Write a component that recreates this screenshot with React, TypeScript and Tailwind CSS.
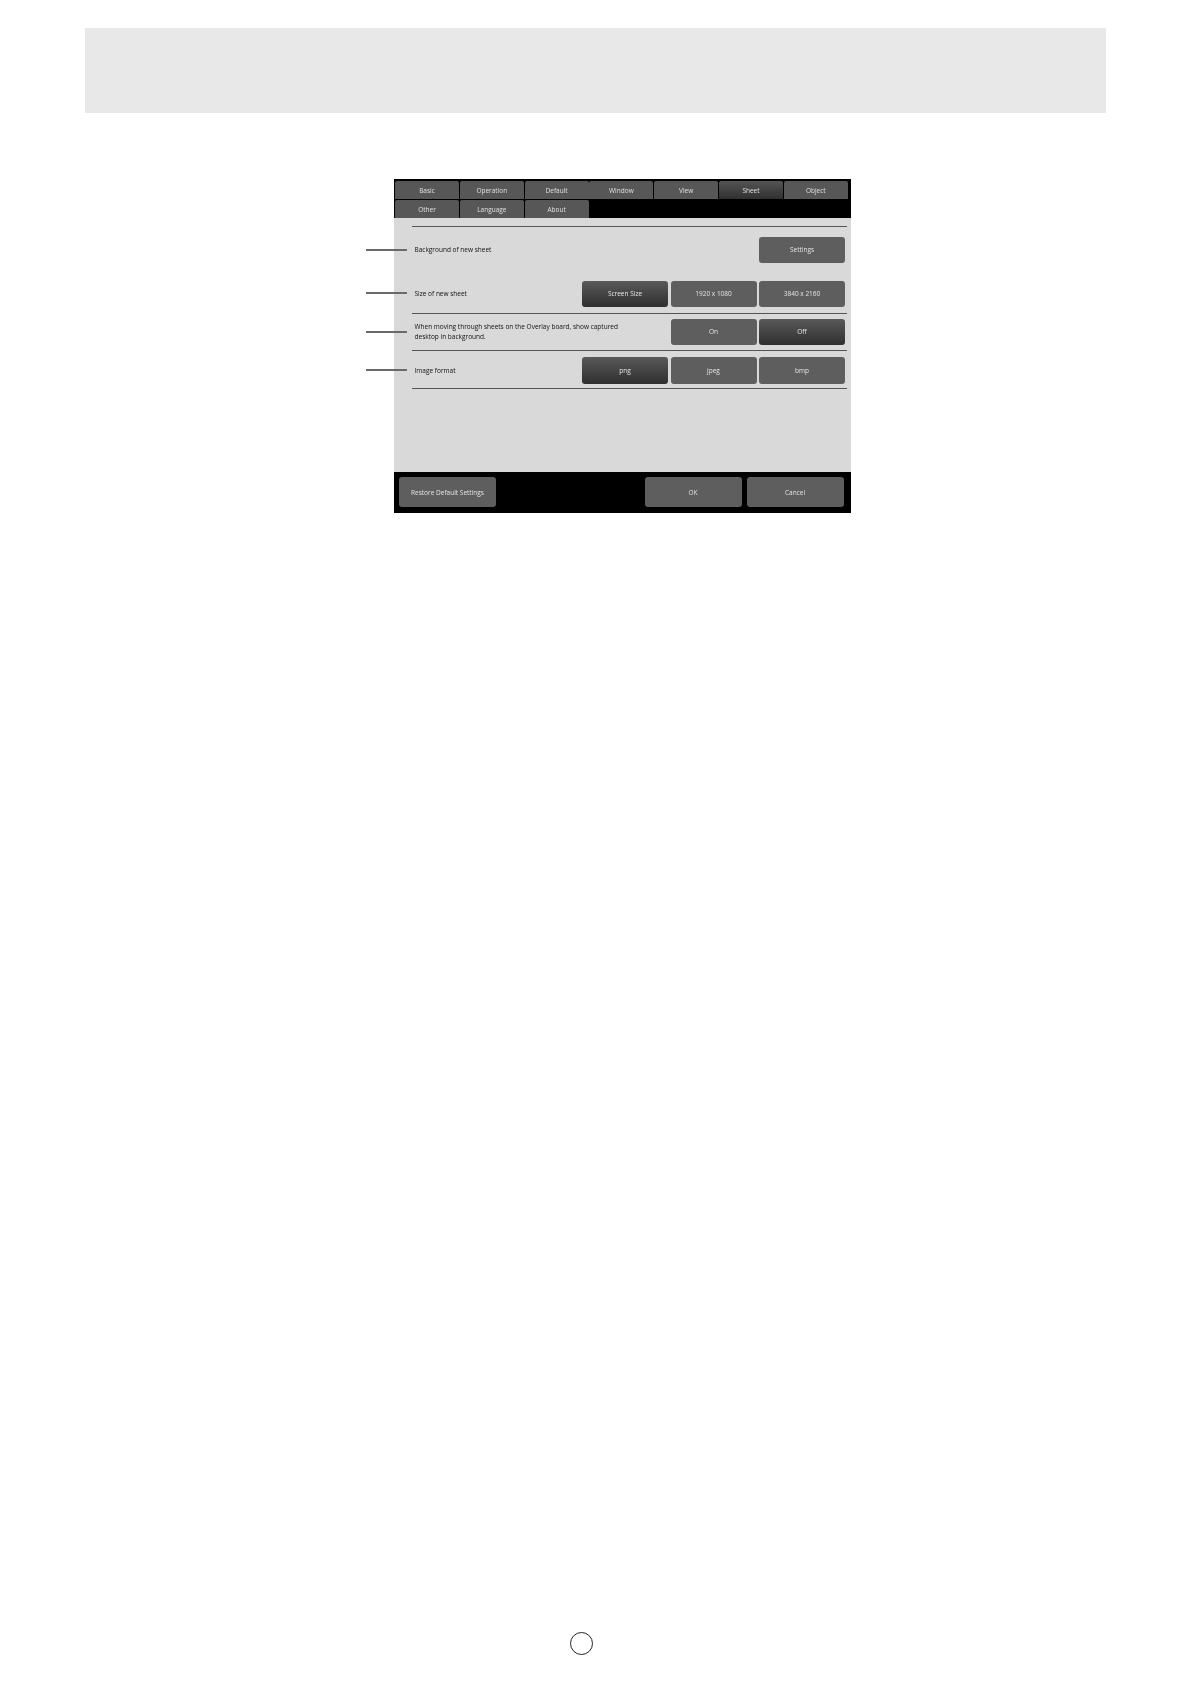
const font = "[font-family:'Open_Sans','Noto_Sans',sans-serif]";

function Btn({ label, active = false }: { label: string; active?: boolean }) {
  return (
    <div
      className={
        active
          ? "flex h-[26.5px] w-[86px] items-center justify-center rounded-[3px] bg-gradient-to-b from-[#5a5a5a] to-[#2f2f2f] text-[6.5px] text-[#e4e4e4]"
          : "flex h-[26.5px] w-[86px] items-center justify-center rounded-[3px] bg-[#5e5e5e] text-[6.5px] text-[#e4e4e4]"
      }
    >
      {label}
    </div>
  );
}

function Tab({ label, active = false }: { label: string; active?: boolean }) {
  return (
    <div
      className={
        active
          ? "flex h-[17.5px] w-[64px] items-center justify-center rounded-t-[2px] bg-gradient-to-b from-[#555555] to-[#303030] pt-[1.5px] text-[6.5px] text-[#e0e0e0]"
          : "flex h-[17.5px] w-[64px] items-center justify-center rounded-t-[2px] bg-[#575757] pt-[1.5px] text-[6.5px] text-[#e0e0e0]"
      }
    >
      {label}
    </div>
  );
}

function FootBtn({ label }: { label: string }) {
  return (
    <div className="flex h-[30px] w-[97px] items-center justify-center rounded-[3px] bg-[#5e5e5e] pt-[1px] text-[6.5px] text-[#e4e4e4]">
      {label}
    </div>
  );
}

function Leader({ className }: { className: string }) {
  return <div className={"absolute left-[366px] h-[2px] w-[41px] bg-[#6a6a6a] " + className} />;
}

export default function App() {
  return (
    <div className={"relative h-[1684px] w-[1191px] overflow-hidden bg-white pt-[28px] " + font}>
      <div className="ml-[85px] h-[85px] w-[1021px] bg-[#e8e8e8]" />

      <div className="ml-[394px] mt-[66px] flex h-[334px] w-[457px] flex-col bg-black blur-[0.3px]">
        <div className="flex flex-col gap-[1.5px] pl-[1px] pt-[2px]">
          <div className="flex gap-[0.8px]">
            <Tab label="Basic" />
            <Tab label="Operation" />
            <Tab label="Default" />
            <Tab label="Window" />
            <Tab label="View" />
            <Tab label="Sheet" active />
            <Tab label="Object" />
          </div>
          <div className="flex gap-[0.8px]">
            <Tab label="Other" />
            <Tab label="Language" />
            <Tab label="About" />
          </div>
        </div>

        <div className="mr-[0.5px] flex flex-1 flex-col bg-[#d9d9d9] pl-[18px] pr-[4px] pt-[8px] text-[6.5px] text-[#111]">
          <div className="border-t border-[#555] pl-[2.5px] pr-[1.5px]">
            <div className="flex items-center justify-between pt-[10px]">
              <span>Background of new sheet</span>
              <Btn label="Settings" />
            </div>
            <div className="flex items-center justify-between pt-[17.5px]">
              <span>Size of new sheet</span>
              <div className="flex gap-[2.5px]">
                <Btn label="Screen Size" active />
                <Btn label="1920 x 1080" />
                <Btn label="3840 x 2160" />
              </div>
            </div>
          </div>
          <div className="mt-[5.5px] border-t border-[#555] pl-[2.5px] pr-[1.5px]">
            <div className="flex items-center justify-between pb-[5.2px] pt-[5.3px]">
              <span className="w-[214px] leading-[10.5px]">
                When moving through sheets on the Overlay board, show captured desktop in background.
              </span>
              <div className="flex gap-[2.5px]">
                <Btn label="On" />
                <Btn label="Off" active />
              </div>
            </div>
          </div>
          <div className="border-t border-[#555] pl-[2.5px] pr-[1.5px]">
            <div className="flex items-center justify-between pb-[4.8px] pt-[5.7px]">
              <span>Image format</span>
              <div className="flex gap-[2.5px]">
                <Btn label="png" active />
                <Btn label="jpeg" />
                <Btn label="bmp" />
              </div>
            </div>
          </div>
          <div className="border-t border-[#555]" />
        </div>

        <div className="flex h-[41.5px] shrink-0 items-center justify-between pl-[5px] pr-[7.5px]">
          <FootBtn label="Restore Default Settings" />
          <div className="flex gap-[5px]">
            <FootBtn label="OK" />
            <FootBtn label="Cancel" />
          </div>
        </div>
      </div>

      <Leader className="top-[249px]" />
      <Leader className="top-[292px]" />
      <Leader className="top-[331px]" />
      <Leader className="top-[369px]" />

      <div className="absolute left-[569.5px] top-[1632px] h-[23px] w-[23px] rounded-full border border-[#222]" />
    </div>
  );
}
